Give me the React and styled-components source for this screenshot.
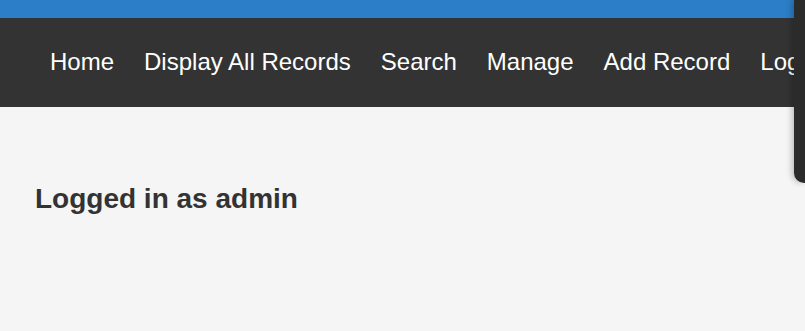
import React from 'react'
import styled, { createGlobalStyle } from 'styled-components';

const GlobalStyle = createGlobalStyle`
    html, body {
        margin: 0;
        padding: 0;
        height: 100%;
        overflow: hidden;
        background-color: #f5f5f5;
        font-family: "Liberation Sans", Arial, sans-serif;
    }
`;

const links = ['Home', 'Display All Records', 'Search', 'Manage', 'Add Record', 'Logout'];

function App() {
    return (
        <PageStyled>
            <GlobalStyle />
            <div className="top-bar" />
            <nav className="nav">
                <ul className="nav-items">
                    {links.map((l) => (
                        <li className="nav-item" key={l}>
                            <a href="#">{l}</a>
                        </li>
                    ))}
                </ul>
            </nav>
            <main className="content">
                <h2>Logged in as admin</h2>
            </main>
            <Drawer />
        </PageStyled>
    )
}

const PageStyled = styled.div `
    min-height: 100vh;
    position: relative;
.top-bar{
    height: 18px;
    background-color: #2b7ec7;
}
.nav{
    height: 89px;
    box-sizing: border-box;
    background-color: #333333;
    display: flex;
    align-items: center;
    padding: 0 35px 2px;
    overflow: hidden;
    white-space: nowrap;
}
.nav-items{
    display: flex;
    list-style: none;
    margin: 0;
    padding: 0;
    li a{
        display: block;
        padding: 0 15px;
        color: #ffffff;
        font-size: 24px;
        text-decoration: none;
    }
}
.content{
    padding: 76px 35px 0;
    h2{
        margin: 0;
        font-size: 28px;
        font-weight: 700;
        color: #333333;
    }
}
`;

const Drawer = styled.div `
    position: absolute;
    top: 0;
    right: 0;
    width: 11px;
    height: 183px;
    background-color: #2b2b2b;
    border-bottom-left-radius: 10px;
    box-shadow: -2px 0 6px rgba(0, 0, 0, 0.25);
`;

export default App;
